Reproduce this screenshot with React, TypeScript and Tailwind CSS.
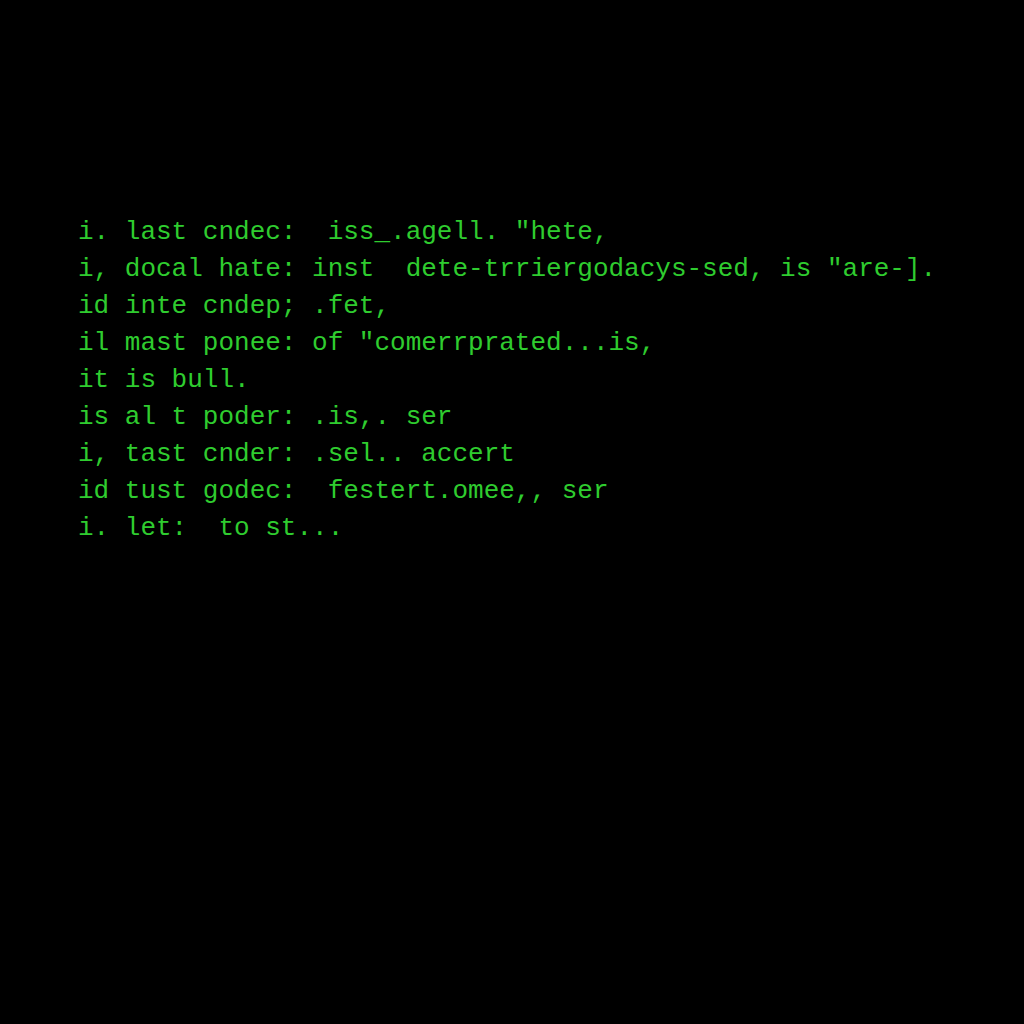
const lines = [
  'i. last cndec:  iss_.agell. "hete,',
  'i, docal hate: inst  dete-trriergodacys-sed, is "are-].',
  'id inte cndep; .fet,',
  'il mast ponee: of "comerrprated...is,',
  'it is bull.',
  'is al t poder: .is,. ser',
  'i, tast cnder: .sel.. accert',
  'id tust godec:  festert.omee,, ser',
  'i. let:  to st...',
]

export default function App() {
  return (
    <div className="w-[1024px] h-[1024px] bg-black pt-[214px] pl-[78px]">
      <div className="font-['Liberation_Mono',monospace] text-[26px] leading-[37px] text-[#2fcc2f] whitespace-pre">
        {lines.map((line) => (
          <div key={line}>{line}</div>
        ))}
      </div>
    </div>
  )
}
